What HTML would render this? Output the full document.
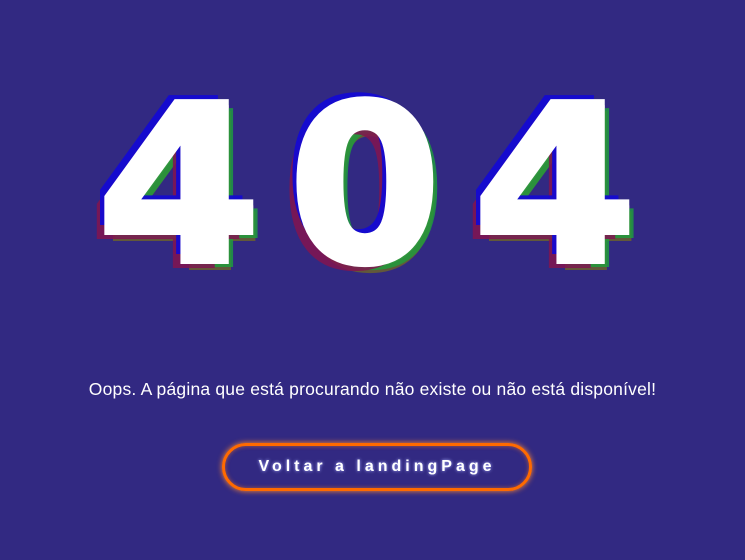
<!DOCTYPE html>
<html><head><meta charset="utf-8"><style>
html,body{margin:0;padding:0;}
body{width:745px;height:560px;background:#322982;position:relative;overflow:hidden;font-family:"Liberation Sans",sans-serif;}
.d{position:absolute;top:78px;font-family:"DejaVu Sans",sans-serif;font-weight:bold;font-size:218px;line-height:218px;color:#fff;-webkit-text-stroke:6px #fff;transform-origin:left top;
text-shadow:-7px -7px 0 rgba(20,10,210,.95),-10px 7px 0 rgba(130,20,80,.85),7px 6px 0 rgba(30,160,60,.8),5px 9px 0 rgba(110,100,40,.8),3px 3px 0 rgba(230,200,210,.9);}
.f{transform:scaleX(1.08);}
.msg{position:absolute;top:379px;left:0;width:745px;text-align:center;color:#fff;font-size:17.5px;letter-spacing:0.2px;}
.btn{position:absolute;left:222px;top:443px;width:304px;height:42px;border:3px solid #ff6a00;border-radius:26px;box-shadow:0 0 6px #ff8a30,inset 0 0 4px rgba(255,120,30,.6);color:#fff;font-weight:bold;font-size:16px;letter-spacing:4px;text-align:center;line-height:42px;text-shadow:0 0 3px #aab0ff;}
</style></head><body>
<div class="d f" style="left:97px">4</div>
<div class="d" style="left:289px">0</div>
<div class="d f" style="left:473px">4</div>
<div class="msg">Oops. A página que está procurando não existe ou não está disponível!</div>
<div class="btn">Voltar a landingPage</div>
</body></html>
